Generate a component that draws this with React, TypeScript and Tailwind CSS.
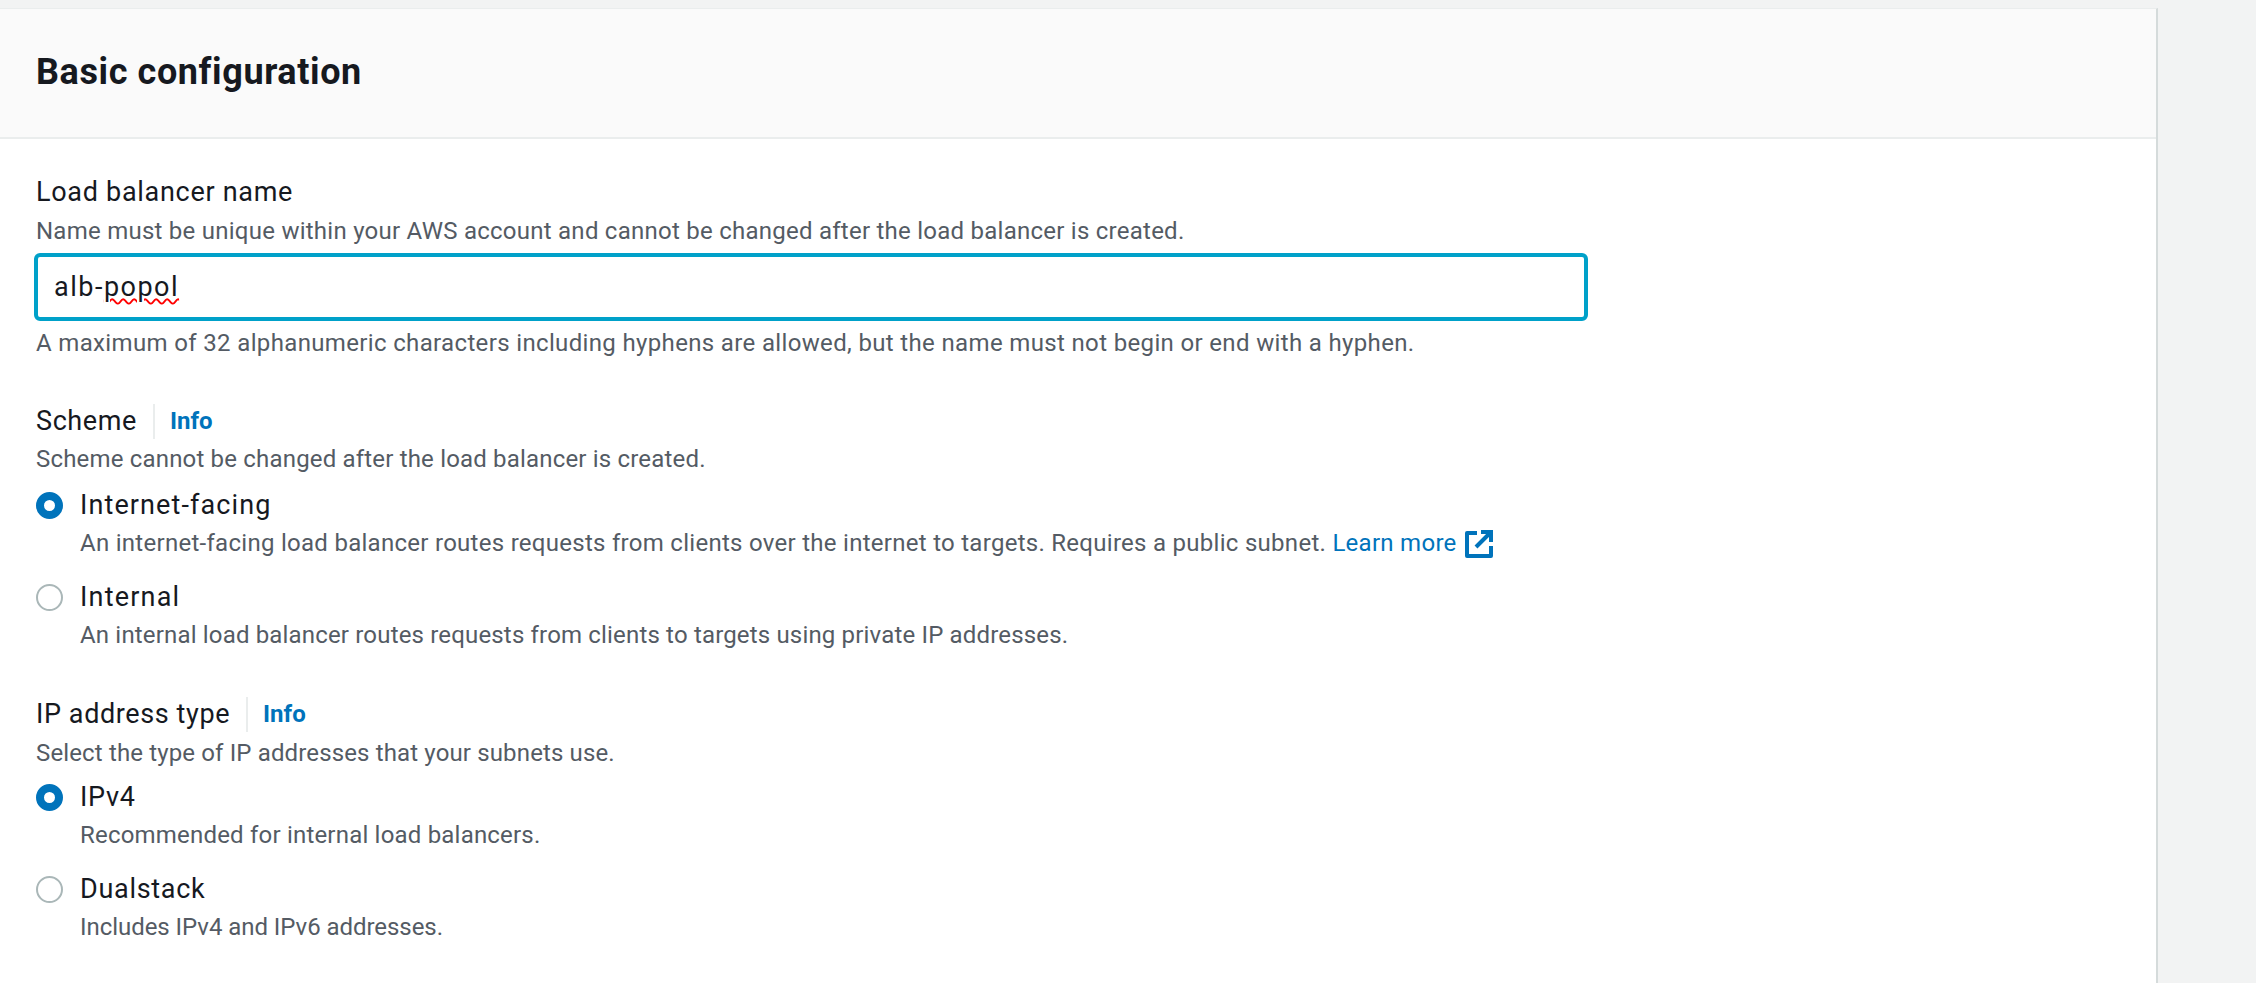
function ExternalIcon() {
  return (
    <svg viewBox="0 0 28 28" className="ml-[8px] inline-block h-[28px] w-[28px] align-[-7px]" fill="none" stroke="#0073bb" strokeWidth="4">
      <path d="M12 3H2v23h24V16" strokeLinejoin="round" />
      <path d="M16 2h10v10" />
      <path d="M26 2 11 17" />
    </svg>
  );
}

function FieldTitle({ label }: { label: string }) {
  return (
    <div className="flex h-[36px] items-center">
      <span className="text-[27px] leading-[30px] tracking-[0.6px] text-[#16191f]">{label}</span>
      <span className="ml-[16px] h-[35px] w-[2px] bg-[#eaeded]" />
      <span className="ml-[15px] text-[24px] font-bold leading-[30px] text-[#0073bb]">Info</span>
    </div>
  );
}

interface RadioOptionProps {
  label: string;
  checked?: boolean;
  className: string;
  labelClass: string;
  descClass: string;
  children: React.ReactNode;
}

function RadioOption({ label, checked, className, labelClass, descClass, children }: RadioOptionProps) {
  return (
    <div className={`flex ${className}`}>
      <div className="flex h-[30px] w-[44px] shrink-0 items-center">
        {checked ? (
          <span className="h-[27px] w-[27px] rounded-full border-[8px] border-[#0073bb] bg-white" />
        ) : (
          <span className="h-[27px] w-[27px] rounded-full border-2 border-[#aab7b8] bg-white" />
        )}
      </div>
      <div>
        <div className={`text-[27px] leading-[30px] text-[#16191f] ${labelClass}`}>{label}</div>
        <div className={`mt-[10px] text-[24px] leading-[27px] text-[#545b64] ${descClass}`}>{children}</div>
      </div>
    </div>
  );
}

export default function App() {
  return (
    <div className="h-[983px] overflow-hidden bg-[#f2f3f3] pt-[8px] font-['Roboto',sans-serif]">
      <div className="h-[975px] w-[2158px] border-r-2 border-t border-[#d5dbdb] border-t-[#eaeded] bg-white">
        <div className="flex h-[130px] items-center border-b-2 border-[#eaeded] bg-[#fafafa] pb-[2px] pl-[36px]">
          <h2 className="text-[36px] font-bold leading-[36px] tracking-[0.6px] text-[#16191f]">Basic configuration</h2>
        </div>

        <div className="pl-[36px] pt-[38px]">
          <div className="text-[27px] leading-[30px] tracking-[0.7px] text-[#16191f]">Load balancer name</div>
          <p className="mt-[11px] text-[24px] leading-[27px] tracking-[0.25px] text-[#545b64]">
            Name must be unique within your AWS account and cannot be changed after the load balancer is created.
          </p>
          <div className="-ml-[2px] mt-[8px] flex h-[68px] w-[1554px] items-center rounded-[6px] border-[4px] border-[#00a1c9] bg-white pl-[16px] text-[27px] tracking-[1.5px] text-[#16191f]">
            alb-<span className="underline decoration-[#ff0000] decoration-wavy decoration-[1.5px] underline-offset-2">popol</span>
          </div>
          <p className="mt-[9px] text-[24px] leading-[27px] tracking-[0.35px] text-[#545b64]">
            A maximum of 32 alphanumeric characters including hyphens are allowed, but the name must not begin or end with a hyphen.
          </p>

          <div className="mt-[46px]">
            <FieldTitle label="Scheme" />
            <p className="mt-[7px] text-[24px] leading-[27px] tracking-[0.18px] text-[#545b64]">Scheme cannot be changed after the load balancer is created.</p>
            <RadioOption label="Internet-facing" checked className="mt-[17px]" labelClass="tracking-[1.1px]" descClass="tracking-[0.28px]">
              An internet-facing load balancer routes requests from clients over the internet to targets. Requires a public subnet.{" "}
              <span className="text-[#0073bb]">Learn more</span>
              <ExternalIcon />
            </RadioOption>
            <RadioOption label="Internal" className="mt-[24px]" labelClass="tracking-[1.2px]" descClass="tracking-[0.17px]">
              An internal load balancer routes requests from clients to targets using private IP addresses.
            </RadioOption>
          </div>

          <div className="mt-[47px]">
            <FieldTitle label="IP address type" />
            <p className="mt-[8px] text-[24px] leading-[27px] tracking-[0.14px] text-[#545b64]">Select the type of IP addresses that your subnets use.</p>
            <RadioOption label="IPv4" checked className="mt-[15px]" labelClass="tracking-[0.7px]" descClass="tracking-[0.2px]">Recommended for internal load balancers.</RadioOption>
            <RadioOption label="Dualstack" className="mt-[25px]" labelClass="tracking-[0.7px]" descClass="tracking-[-0.05px]">Includes IPv4 and IPv6 addresses.</RadioOption>
          </div>
        </div>
      </div>
    </div>
  );
}
